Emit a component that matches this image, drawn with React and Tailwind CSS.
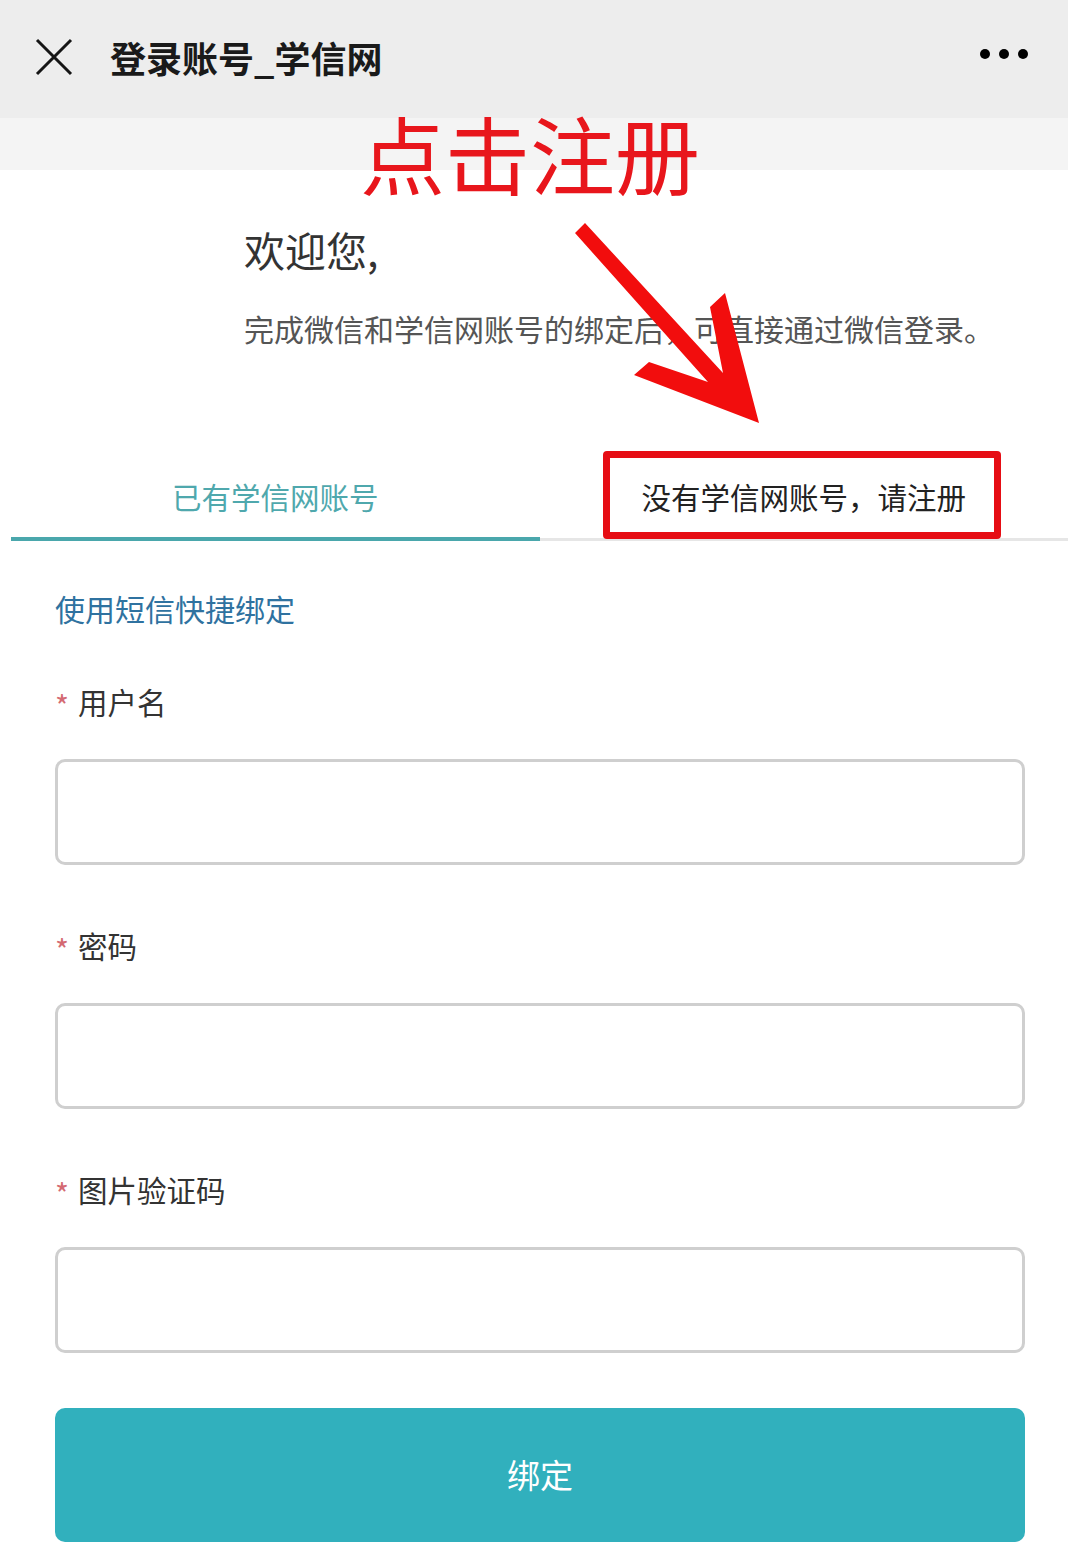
import React from 'react';

const cjk = { fontFamily: '"Noto Sans CJK SC", "Noto Sans", sans-serif' };

const Field = ({ label }) => (
    <div>
        <div className="flex items-center h-[30px] text-[29.5px] leading-[30px] text-[#333]">
            <span className="text-[#d46a72] text-[30px] w-[23px] pt-[8px]">*</span>
            <span>{label}</span>
        </div>
        <div className="mt-[43px] h-[106px] rounded-[10px] border-[3px] border-[#cfcfcf] bg-white"></div>
    </div>
);

const App = () => {
    return (
        <div className="relative w-[1068px] h-[1549px] bg-white overflow-hidden" style={cjk}>
            {/* top bar */}
            <div className="h-[118px] bg-[#ededed] flex items-center px-[35px]">
                <svg width="38" height="38" viewBox="0 0 38 38" className="mb-[4px]">
                    <path d="M2 2 L36 36 M36 2 L2 36" stroke="#151515" strokeWidth="3" fill="none" />
                </svg>
                <h1 className="ml-[37px] text-[36px] font-bold text-[#1a1a1a] leading-none mb-[4px]">登录账号_学信网</h1>
                <div className="ml-auto flex items-center gap-[9px] mr-[5px] mb-[10px]">
                    <span className="w-[10px] h-[10px] rounded-full bg-black"></span>
                    <span className="w-[10px] h-[10px] rounded-full bg-black"></span>
                    <span className="w-[10px] h-[10px] rounded-full bg-black"></span>
                </div>
            </div>
            <div className="h-[52px] bg-[#f4f4f4]"></div>

            {/* welcome */}
            <div className="pl-[244px] pt-[59px]">
                <p className="text-[41px] leading-[41px] text-[#333]">欢迎您,</p>
                <p className="mt-[43px] text-[30px] leading-[30px] text-[#555] whitespace-nowrap">完成微信和学信网账号的绑定后，可直接通过微信登录。</p>
            </div>

            {/* tabs */}
            <div className="mt-[106px] pl-[11px] flex">
                <div className="flex-1 h-[92px] pt-[6px] flex items-center justify-center border-b-4 border-[#4aa7ac] text-[29.5px] text-[#4fa8ad]">
                    已有学信网账号
                </div>
                <div className="relative flex-1 h-[92px] pt-[6px] flex items-center justify-center border-b-[3px] border-[#e6e6e6] text-[29.5px] text-[#222]">
                    没有学信网账号，请注册
                    <div className="absolute left-[63px] top-[2px] w-[398px] h-[88px] border-[7px] border-[#e60d14] rounded-[4px]"></div>
                </div>
            </div>

            {/* form */}
            <div className="pl-[55px] pr-[43px]">
                <p className="mt-[52px] text-[30px] leading-[30px] text-[#2f72a0]">使用短信快捷绑定</p>
                <div className="mt-[63px] flex flex-col gap-[65px]">
                    <Field label="用户名" />
                    <Field label="密码" />
                    <Field label="图片验证码" />
                </div>
                <button className="mt-[55px] w-full h-[134px] rounded-[10px] bg-[#31b0bd] text-white text-[33px] flex items-center justify-center">
                    绑定
                </button>
            </div>

            {/* annotation overlay */}
            <div className="absolute left-[360px] top-[109px] text-[85px] leading-[85px] text-[#e8161c] whitespace-nowrap">点击注册</div>
            <svg className="absolute left-[560px] top-[210px]" width="220" height="230" viewBox="0 0 220 230">
                <polygon
                    points="15,23 25,13 163,163 150,97 165,83 199,213 74,165 89,152 148,172"
                    fill="#f20d0d"
                />
            </svg>
        </div>
    );
};

export default App;
